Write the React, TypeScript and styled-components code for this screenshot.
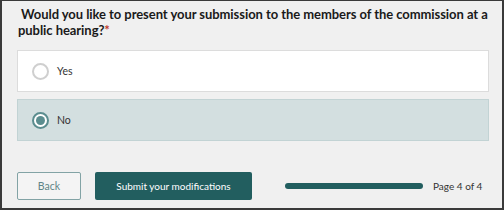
import React from 'react';
import styled, {createGlobalStyle} from 'styled-components';

const teal = '#225e5f';

const GlobalStyle = createGlobalStyle`
    html, body {
        margin: 0;
        padding: 0;
        background: #f0f0f0;
    }
    * {
        box-sizing: border-box;
    }
`;

const Frame = styled.div`
    width: 504px;
    height: 210px;
    background: #f0f0f0;
    border: 1px solid #3a3a3a;
    border-left-width: 2px;
    border-right-width: 2px;
    border-bottom-width: 2px;
    font-family: Lato, "Open Sans", sans-serif;
    color: #333;
    padding: 5px 13px 0 15px;
    display: flex;
    flex-direction: column;
`;

const Question = styled.div`
    font-size: 13px;
    font-weight: 700;
    letter-spacing: -0.06px;
    line-height: 16px;
    color: #1a1a1a;
    padding-left: 1px;
    margin-right: -8px;
    margin-bottom: 12px;
`;

const Required = styled.span`
    color: #c0392b;
`;

const Options = styled.div`
    display: flex;
    flex-direction: column;
    gap: 7px;
`;

const Option = styled.label<{ $checked?: boolean }>`
    height: 42px;
    display: flex;
    align-items: center;
    padding-left: 14px;
    gap: 8px;
    background: ${p => p.$checked ? '#d3dfe0' : '#fff'};
    border: 1px solid ${p => p.$checked ? '#c2d3d4' : '#dcdcdc'};
    font-size: 10.5px;
    color: #333;
`;

const Radio = styled.span<{ $checked?: boolean }>`
    width: 17px;
    height: 17px;
    border-radius: 50%;
    border: 2px solid ${p => p.$checked ? '#5b8d8f' : '#cfcfcf'};
    background: #fff;
    display: flex;
    align-items: center;
    justify-content: center;
    &::after {
        content: '';
        width: 9px;
        height: 9px;
        border-radius: 50%;
        background: ${p => p.$checked ? '#5b8d8f' : 'transparent'};
    }
`;

const Footer = styled.div`
    display: flex;
    align-items: center;
    margin-top: 31px;
`;

const BackButton = styled.button`
    width: 64px;
    height: 28px;
    background: #f4f4f4;
    border: 1px solid #82a3a5;
    border-radius: 2px;
    color: #5f8587;
    font-family: inherit;
    font-size: 10.5px;
    padding: 0;
`;

const SubmitButton = styled.button`
    width: 157px;
    height: 28px;
    margin-left: 14px;
    background: ${teal};
    border: none;
    border-radius: 2px;
    color: #fff;
    font-family: inherit;
    font-size: 10px;
    padding: 0;
`;

const Progress = styled.div`
    width: 138px;
    height: 6px;
    border-radius: 3px;
    background: ${teal};
    margin-left: 33px;
`;

const PageLabel = styled.span`
    margin-left: 10px;
    font-size: 10px;
    color: #333;
`;

export default function App() {
    return (
        <>
            <GlobalStyle/>
            <Frame>
                <Question>
                    &nbsp;Would you like to present your submission to the members of the commission at a public hearing?<Required>*</Required>
                </Question>
                <Options>
                    <Option>
                        <Radio/>
                        Yes
                    </Option>
                    <Option $checked>
                        <Radio $checked/>
                        No
                    </Option>
                </Options>
                <Footer>
                    <BackButton>Back</BackButton>
                    <SubmitButton>Submit your modifications</SubmitButton>
                    <Progress/>
                    <PageLabel>Page 4 of 4</PageLabel>
                </Footer>
            </Frame>
        </>
    );
}
